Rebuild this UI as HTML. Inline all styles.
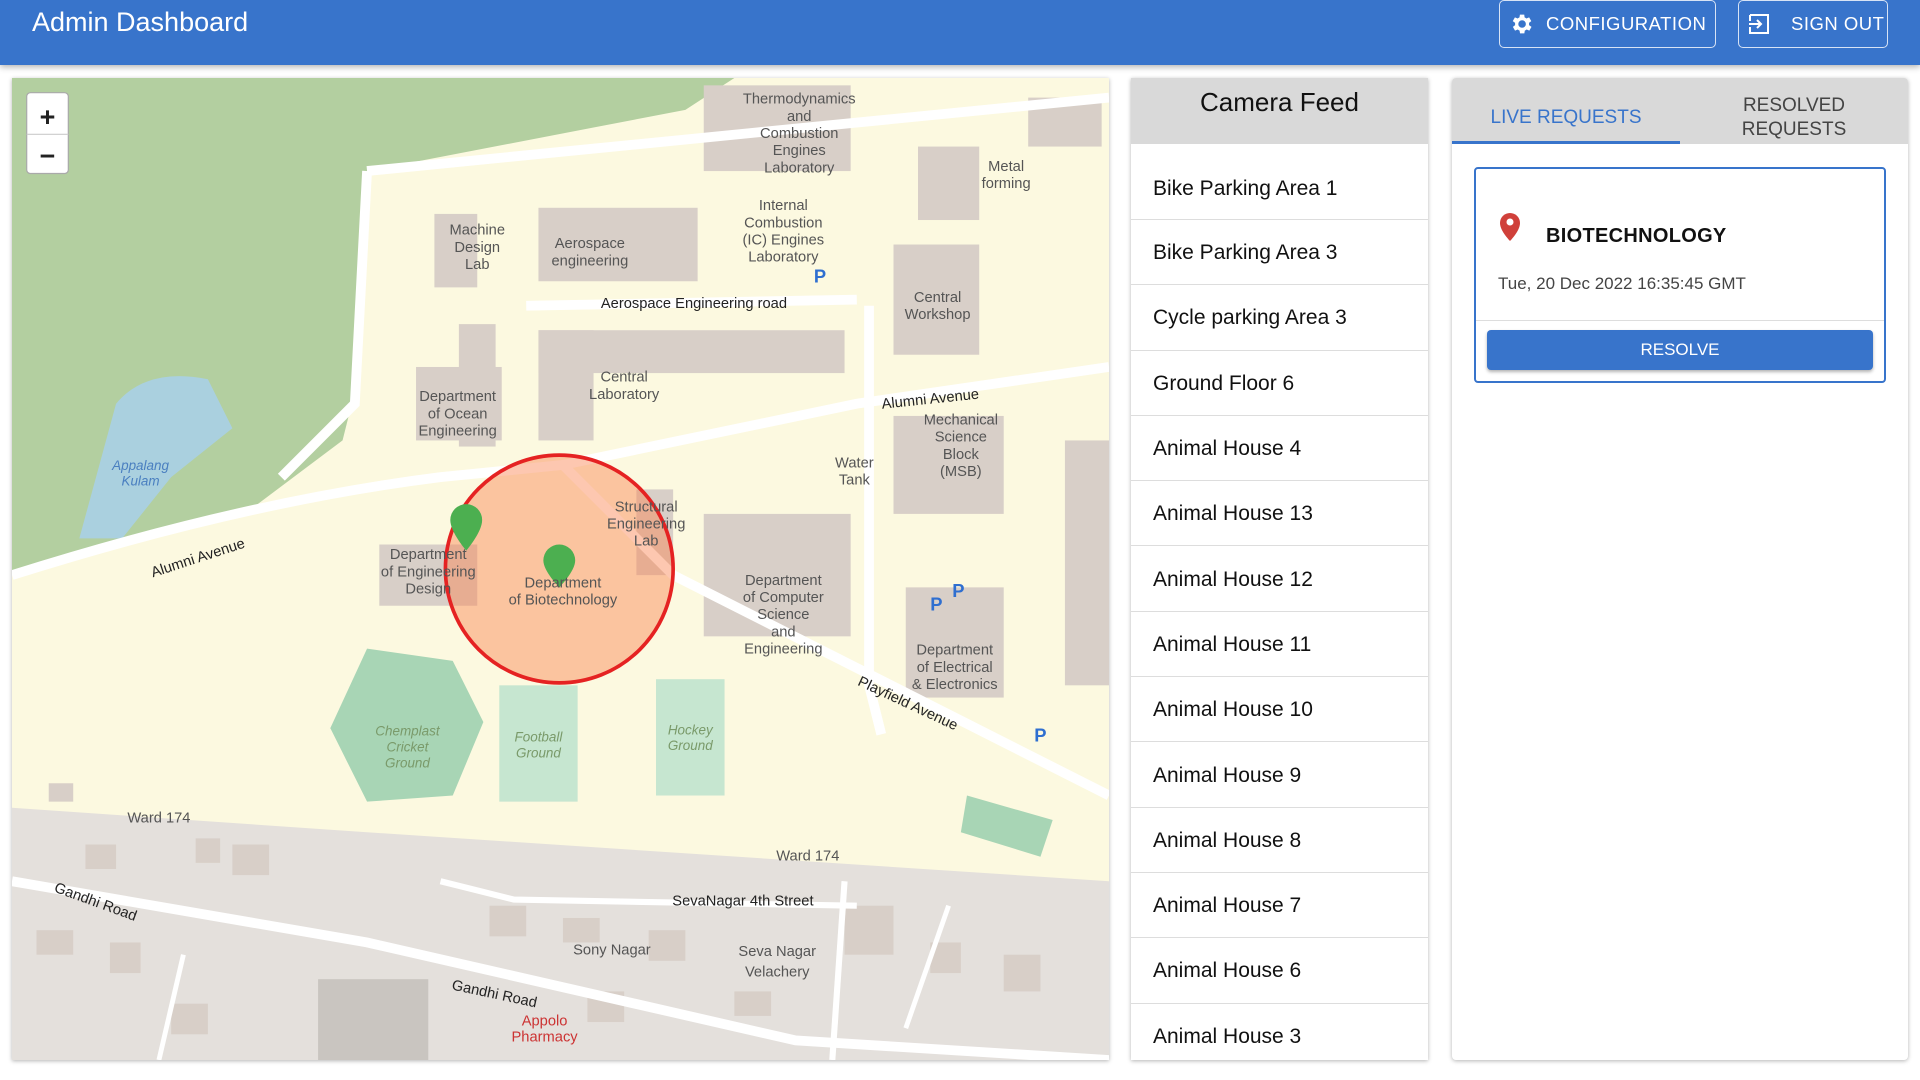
<!DOCTYPE html>
<html><head><meta charset="utf-8"><style>
*{box-sizing:border-box;margin:0;padding:0}
body{width:1920px;height:1080px;background:#fff;font-family:"Liberation Sans",Arial,sans-serif;position:relative;overflow:hidden}
.hdr{position:absolute;left:0;top:0;width:1920px;height:65px;background:#3874cb;box-shadow:0 2px 6px rgba(0,0,0,.3)}
.hdr h1{position:absolute;left:32px;top:7px;color:#fff;font-weight:400;font-size:27px}
.btn{position:absolute;top:0;height:48px;border:1.5px solid rgba(255,255,255,.8);border-radius:5px;color:#fff;font-size:19px;letter-spacing:.5px;display:flex;align-items:center;gap:14px;padding-left:8px}
.map{position:absolute;left:12px;top:78px;width:1097px;height:982px;overflow:hidden;box-shadow:0 1px 4px rgba(0,0,0,.3)}
.cam{position:absolute;left:1131px;top:78px;width:297px;height:982px;box-shadow:0 1px 4px rgba(0,0,0,.3);overflow:hidden;background:#fff}
.cam .h{height:66px;background:#d9d9d9;text-align:center;font-size:26px;padding-top:9px;color:#111}
.cam .it{height:65.3px;border-bottom:1px solid #ddd;font-size:21px;color:#111;padding-left:22px;display:flex;align-items:center;padding-top:2px}
.req{position:absolute;left:1452px;top:78px;width:456px;height:982px;box-shadow:0 1px 4px rgba(0,0,0,.3);background:#fff;border-radius:4px;overflow:hidden}
.tabs{height:66px;background:#d9d9d9;position:relative}
.t1{position:absolute;left:0;top:0;width:228px;height:66px;color:#3874cb;font-size:19px;text-align:center;padding-top:29px;border-bottom:3px solid #3874cb}
.t2{position:absolute;left:228px;top:16px;width:228px;color:#444;font-size:19px;text-align:center;line-height:24px}
.card{position:absolute;left:22px;top:89px;width:412px;height:216px;border:2.5px solid #3874cb;border-radius:4px}
.card .ti{position:absolute;left:70px;top:56px;font-weight:700;font-size:20px;color:#111;letter-spacing:.3px}
.card .dt{position:absolute;left:22px;top:105px;font-size:17px;color:#444}
.card .ln{position:absolute;left:0;right:0;top:151px;border-top:1px solid #ddd}
.card .rb{position:absolute;left:11px;right:11px;top:161px;height:40px;background:#3874cb;border-radius:4px;color:#fff;font-size:17px;text-align:center;line-height:40px;box-shadow:0 2px 3px rgba(0,0,0,.3)}
</style></head><body>
<div class="hdr"><h1>Admin Dashboard</h1>
<div class="btn" style="left:1499px;width:217px;gap:12px"><svg width="26" height="26" viewBox="0 0 24 24"><path fill="#fff" d="M19.4 13a7.5 7.5 0 000-2l2.1-1.6-2-3.5-2.5 1a7 7 0 00-1.7-1L15 3.3h-4l-.4 2.6a7 7 0 00-1.7 1l-2.5-1-2 3.5L6.6 11a7.5 7.5 0 000 2l-2.1 1.6 2 3.5 2.5-1a7 7 0 001.7 1l.4 2.6h4l.4-2.6a7 7 0 001.7-1l2.5 1 2-3.5zM13 15.5a3.5 3.5 0 110-7 3.5 3.5 0 010 7z"/></svg><span style="font-size:18.5px">CONFIGURATION</span></div>
<div class="btn" style="left:1738px;width:150px;gap:20px"><svg width="24" height="24" viewBox="0 0 24 24" fill="none" stroke="#fff" stroke-width="2"><path d="M3 3h18v18H3v-6M3 9V3M2 12h12M10 8l4 4-4 4"/></svg><span style="font-size:18.5px">SIGN OUT</span></div>
</div>
<div class="map"><svg width="1097" height="982" viewBox="10 64 896 802" preserveAspectRatio="none" font-family="Liberation Sans" font-size="12" fill="#555">
<rect x="10" y="64" width="896" height="802" fill="#fcf9e0"/>
<path d="M10 64H600L560 90 300 140 290 320 280 360 200 420 10 470Z" fill="#b3cfa0"/>
<path d="M95 330 Q120 300 170 310 L190 350 L140 390 L100 440 L65 440 Z" fill="#aad0df"/>
<path d="M10 660 L300 680 L906 720 V866 H10Z" fill="#e4e0dc"/>
<g fill="#d8cfc8">
<rect x="355" y="175" width="35" height="60"/><rect x="440" y="170" width="130" height="60"/><rect x="375" y="265" width="30" height="100"/><rect x="340" y="300" width="70" height="60"/>
<rect x="440" y="270" width="250" height="35"/><rect x="440" y="270" width="45" height="90"/><rect x="730" y="200" width="70" height="90"/><rect x="575" y="70" width="120" height="70"/>
<rect x="730" y="340" width="90" height="80"/><rect x="575" y="420" width="120" height="100"/><rect x="740" y="480" width="80" height="90"/><rect x="520" y="400" width="30" height="70"/>
<rect x="310" y="445" width="80" height="50"/><rect x="840" y="80" width="60" height="40"/><rect x="750" y="120" width="50" height="60"/><rect x="870" y="360" width="36" height="200"/>
<rect x="40" y="640" width="20" height="15"/><rect x="70" y="690" width="25" height="20"/><rect x="160" y="685" width="20" height="20"/><rect x="190" y="690" width="30" height="25"/><rect x="30" y="760" width="30" height="20"/><rect x="90" y="770" width="25" height="25"/><rect x="260" y="800" width="90" height="66" fill="#c9c5c0"/><rect x="400" y="740" width="30" height="25"/><rect x="460" y="750" width="30" height="20"/><rect x="530" y="760" width="30" height="25"/><rect x="690" y="740" width="40" height="40"/><rect x="760" y="770" width="25" height="25"/><rect x="820" y="780" width="30" height="30"/><rect x="600" y="810" width="30" height="20"/><rect x="480" y="810" width="30" height="25"/><rect x="140" y="820" width="30" height="25"/>
</g>
<g fill="#c6e6d0"><rect x="408" y="560" width="64" height="95"/><rect x="536" y="555" width="56" height="95"/><polygon points="300,530 370,540 395,590 370,650 300,655 270,595" fill="#a8d5b5"/><polygon points="790,650 860,670 850,700 785,680" fill="#a8d5b5"/></g>
<g stroke="#fff" stroke-width="8" fill="none"><path d="M10 470 Q200 410 360 390 L460 380 L700 330 L906 300"/><path d="M460 380 L550 470 L906 650"/><path d="M300 140 L290 330 L230 390"/><path d="M430 250 L700 245"/><path d="M710 250 L710 560 L720 600"/><path d="M300 140 L906 80"/><path d="M10 720 L300 770 L650 850 L906 866"/><path d="M360 720 L420 735 L700 740" stroke-width="5"/><path d="M690 720 L680 866" stroke-width="5"/><path d="M740 840 L775 740" stroke-width="4"/><path d="M130 866 L150 780" stroke-width="4"/></g>
<circle cx="457" cy="465" r="93" fill="rgba(250,130,80,.45)" stroke="#e52222" stroke-width="3"/>
<g fill="#4caf50"><path d="M381 412a13 13 0 0113 13c0 10-13 25-13 25s-13-15-13-25a13 13 0 0113-13z"/><path d="M457 445a13 13 0 0113 13c0 9-13 22-13 22s-13-13-13-22a13 13 0 0113-13z"/></g>
<g text-anchor="middle"><text x="390" y="192">Machine</text><text x="390" y="206">Design</text><text x="390" y="220">Lab</text>
<text x="482" y="203">Aerospace</text><text x="482" y="217">engineering</text><text x="567" y="252" fill="#222">Aerospace Engineering road</text>
<text x="374" y="328">Department</text><text x="374" y="342">of Ocean</text><text x="374" y="356">Engineering</text><text x="510" y="312">Central</text><text x="510" y="326">Laboratory</text>
<text x="528" y="418">Structural</text><text x="528" y="432">Engineering</text><text x="528" y="446">Lab</text><text x="460" y="480">Department</text><text x="460" y="494">of Biotechnology</text>
<text x="350" y="457">Department</text><text x="350" y="471">of Engineering</text><text x="350" y="485">Design</text>
<text x="640" y="478">Department</text><text x="640" y="492">of Computer</text><text x="640" y="506">Science</text><text x="640" y="520">and</text><text x="640" y="534">Engineering</text>
<text x="785" y="347">Mechanical</text><text x="785" y="361">Science</text><text x="785" y="375">Block</text><text x="785" y="389">(MSB)</text><text x="766" y="247">Central</text><text x="766" y="261">Workshop</text>
<text x="640" y="172">Internal</text><text x="640" y="186">Combustion</text><text x="640" y="200">(IC) Engines</text><text x="640" y="214">Laboratory</text>
<text x="653" y="85">Thermodynamics</text><text x="653" y="99">and</text><text x="653" y="113">Combustion</text><text x="653" y="127">Engines</text><text x="653" y="141">Laboratory</text>
<text x="822" y="140">Metal</text><text x="822" y="154">forming</text><text x="698" y="382">Water</text><text x="698" y="396">Tank</text>
<text x="780" y="535">Department</text><text x="780" y="549">of Electrical</text><text x="780" y="563">&amp; Electronics</text>
<text x="500" y="780">Sony Nagar</text><text x="635" y="781">Seva Nagar</text><text x="635" y="798">Velachery</text><text x="607" y="740" fill="#222">SevaNagar 4th Street</text>
<text x="130" y="672">Ward 174</text><text x="660" y="703">Ward 174</text><text x="445" y="838" fill="#c33">Appolo</text><text x="445" y="851" fill="#c33">Pharmacy</text></g>
<g fill="#7a9a6a" font-style="italic" font-size="11" text-anchor="middle"><text x="333" y="601">Chemplast</text><text x="333" y="614">Cricket</text><text x="333" y="627">Ground</text><text x="440" y="606">Football</text><text x="440" y="619">Ground</text><text x="564" y="600">Hockey</text><text x="564" y="613">Ground</text><text x="115" y="384" fill="#4a7fc0">Appalang</text><text x="115" y="397" fill="#4a7fc0">Kulam</text></g>
<g fill="#2f6fd0" font-size="15" font-weight="bold"><text x="665" y="231">P</text><text x="760" y="499">P</text><text x="778" y="488">P</text><text x="845" y="606">P</text></g>
<text x="120" y="460" fill="#222" transform="rotate(-18 160 450)">Alumni Avenue</text>
<text x="720" y="330" fill="#222" transform="rotate(-6 760 325)">Alumni Avenue</text>
<text x="690" y="575" fill="#222" transform="rotate(25 730 590)">Playfield Avenue</text>
<text x="40" y="740" fill="#222" transform="rotate(20 75 745)">Gandhi Road</text>
<text x="368" y="815" fill="#222" transform="rotate(12 400 815)">Gandhi Road</text>
<rect x="22" y="76" width="34" height="66" fill="#fff" stroke="#aaa" rx="3"/><text x="39" y="103" font-size="22" text-anchor="middle" fill="#222" font-weight="bold">+</text><text x="39" y="135" font-size="22" text-anchor="middle" fill="#222" font-weight="bold">−</text><line x1="22" y1="110" x2="56" y2="110" stroke="#ccc"/>
</svg></div>
<div class="cam"><div class="h">Camera Feed</div>
<div class="it" style="height:76px;padding-top:14px">Bike Parking Area 1</div><div class="it">Bike Parking Area 3</div><div class="it">Cycle parking Area 3</div><div class="it">Ground Floor 6</div><div class="it">Animal House 4</div><div class="it">Animal House 13</div><div class="it">Animal House 12</div><div class="it">Animal House 11</div><div class="it">Animal House 10</div><div class="it">Animal House 9</div><div class="it">Animal House 8</div><div class="it">Animal House 7</div><div class="it">Animal House 6</div><div class="it">Animal House 3</div>
</div>
<div class="req"><div class="tabs"><div class="t1">LIVE REQUESTS</div><div class="t2">RESOLVED<br>REQUESTS</div></div>
<div class="card"><svg style="position:absolute;left:24px;top:44px" width="20" height="28" viewBox="0 0 20 28"><path fill="#d0403a" d="M10 0a10 10 0 0110 10c0 8-10 18-10 18S0 18 0 10A10 10 0 0110 0z"/><circle cx="10" cy="9" r="3.5" fill="#fff"/></svg>
<div class="ti">BIOTECHNOLOGY</div><div class="dt">Tue, 20 Dec 2022 16:35:45 GMT</div><div class="ln"></div><div class="rb">RESOLVE</div></div>
</div>
</body></html>
